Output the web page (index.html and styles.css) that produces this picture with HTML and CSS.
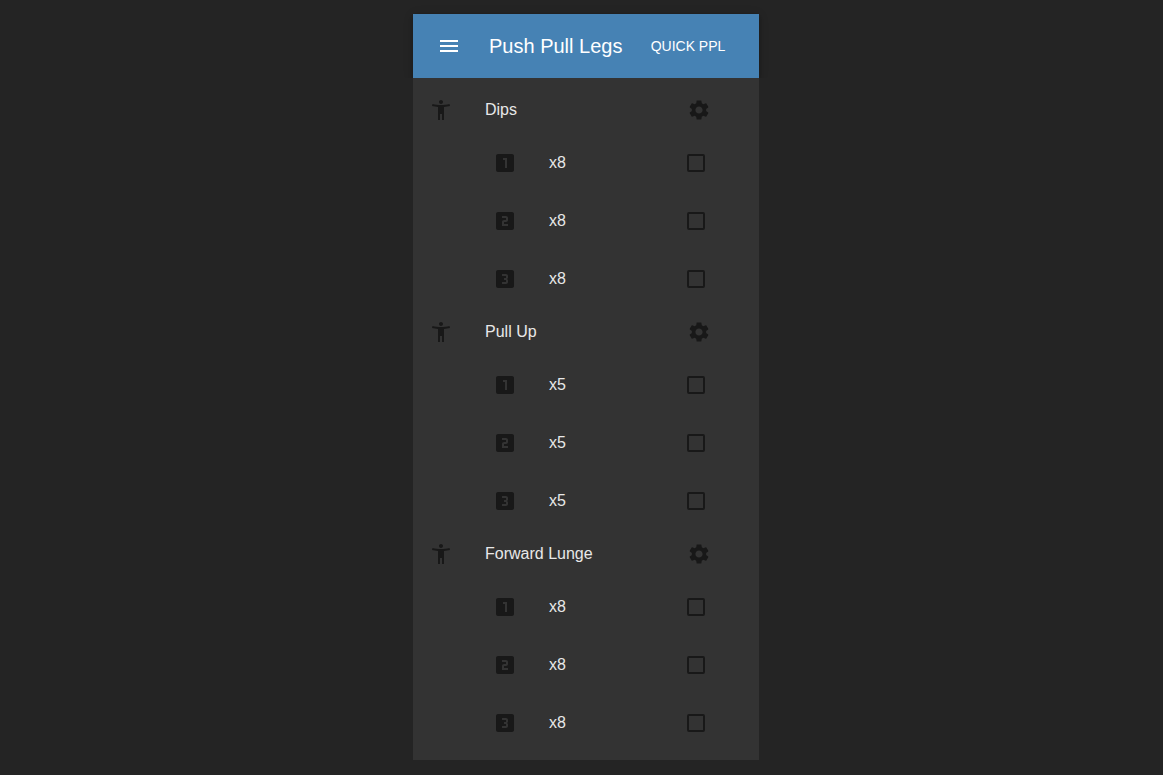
FILE: index.html
```html
<!DOCTYPE html>
<html lang="en">
<head>
<meta charset="utf-8">
<meta name="viewport" content="width=device-width, initial-scale=1">
<title>Push Pull Legs</title>
<link rel="stylesheet" href="styles.css">
</head>
<body>
<svg class="sprite" aria-hidden="true">
<symbol id="menu" viewBox="0 0 24 24"><path d="M3 18h18v-2H3v2zm0-5h18v-2H3v2zm0-7v2h18V6H3z"/></symbol>
<symbol id="person" viewBox="0 0 24 24"><path d="M20.5 6c-2.61.7-5.67 1-8.5 1s-5.89-.3-8.5-1L3 8c1.86.5 4 .83 6 1v13h2v-6h2v6h2V9c2-.17 4.14-.5 6-1l-.5-2zM12 6c1.1 0 2-.9 2-2s-.9-2-2-2-2 .9-2 2 .9 2 2 2z"/></symbol>
<symbol id="gear" viewBox="0 0 24 24"><path d="M19.14,12.94c0.04-0.3,0.06-0.61,0.06-0.94c0-0.32-0.02-0.64-0.07-0.94l2.03-1.58c0.18-0.14,0.23-0.41,0.12-0.61l-1.92-3.32c-0.12-0.22-0.37-0.29-0.59-0.22l-2.39,0.96c-0.5-0.38-1.03-0.7-1.62-0.94L14.4,2.81c-0.04-0.24-0.24-0.41-0.48-0.41h-3.84c-0.24,0-0.43,0.17-0.47,0.41L9.25,5.35C8.66,5.59,8.12,5.92,7.63,6.29L5.24,5.33c-0.22-0.08-0.47,0-0.59,0.22L2.74,8.87C2.62,9.08,2.66,9.34,2.86,9.48l2.03,1.58C4.84,11.36,4.8,11.69,4.8,12s0.02,0.64,0.07,0.94l-2.03,1.58c-0.18,0.14-0.23,0.41-0.12,0.61l1.92,3.32c0.12,0.22,0.37,0.29,0.59,0.22l2.39-0.96c0.5,0.38,1.03,0.7,1.62,0.94l0.36,2.54c0.05,0.24,0.24,0.41,0.48,0.41h3.84c0.24,0,0.44-0.17,0.47-0.41l0.36-2.54c0.59-0.24,1.13-0.56,1.62-0.94l2.39,0.96c0.22,0.08,0.47,0,0.59-0.22l1.92-3.32c0.12-0.22,0.07-0.47-0.12-0.61L19.14,12.94z M12,15.6c-1.98,0-3.6-1.62-3.6-3.6s1.62-3.6,3.6-3.6s3.6,1.62,3.6,3.6S13.98,15.6,12,15.6z"/></symbol>
<symbol id="one" viewBox="0 0 24 24"><path d="M19 3H5c-1.1 0-2 .9-2 2v14c0 1.1.9 2 2 2h14c1.1 0 2-.9 2-2V5c0-1.1-.9-2-2-2zm-5 14h-2V9h-2V7h4v10z"/></symbol>
<symbol id="two" viewBox="0 0 24 24"><path d="M19 3H5c-1.1 0-2 .9-2 2v14c0 1.1.9 2 2 2h14c1.1 0 2-.9 2-2V5c0-1.1-.9-2-2-2zm-4 8c0 1.11-.9 2-2 2h-2v2h4v2H9v-4c0-1.11.9-2 2-2h2V9H9V7h4c1.1 0 2 .89 2 2v2z"/></symbol>
<symbol id="three" viewBox="0 0 24 24"><path d="M19.01 3h-14c-1.1 0-2 .9-2 2v14c0 1.1.9 2 2 2h14c1.1 0 2-.9 2-2V5c0-1.1-.9-2-2-2zm-4 7.5c0 .83-.67 1.5-1.5 1.5.83 0 1.5.67 1.5 1.5V15c0 1.11-.9 2-2 2h-4v-2h4v-2h-2v-2h2V9h-4V7h4c1.1 0 2 .89 2 2v1.5z"/></symbol>
</svg>
<main class="panel">
<header class="bar">
<button class="icon-button" type="button" aria-label="Menu"><svg class="icon"><use href="#menu"/></svg></button>
<h1 class="title">Push Pull Legs</h1>
<button class="text-button" type="button">QUICK PPL</button>
</header>
<div class="workout">
<section>
<div class="exercise"><svg class="icon"><use href="#person"/></svg><h2 class="name">Dips</h2><button class="icon-button" type="button" aria-label="Dips settings"><svg class="icon"><use href="#gear"/></svg></button></div>
<ul class="sets">
<li class="set"><svg class="icon"><use href="#one"/></svg><label class="reps" for="d1">x8</label><input class="check" type="checkbox" id="d1"></li>
<li class="set"><svg class="icon"><use href="#two"/></svg><label class="reps" for="d2">x8</label><input class="check" type="checkbox" id="d2"></li>
<li class="set"><svg class="icon"><use href="#three"/></svg><label class="reps" for="d3">x8</label><input class="check" type="checkbox" id="d3"></li>
</ul>
</section>
<section>
<div class="exercise"><svg class="icon"><use href="#person"/></svg><h2 class="name">Pull Up</h2><button class="icon-button" type="button" aria-label="Pull Up settings"><svg class="icon"><use href="#gear"/></svg></button></div>
<ul class="sets">
<li class="set"><svg class="icon"><use href="#one"/></svg><label class="reps" for="p1">x5</label><input class="check" type="checkbox" id="p1"></li>
<li class="set"><svg class="icon"><use href="#two"/></svg><label class="reps" for="p2">x5</label><input class="check" type="checkbox" id="p2"></li>
<li class="set"><svg class="icon"><use href="#three"/></svg><label class="reps" for="p3">x5</label><input class="check" type="checkbox" id="p3"></li>
</ul>
</section>
<section>
<div class="exercise"><svg class="icon"><use href="#person"/></svg><h2 class="name">Forward Lunge</h2><button class="icon-button" type="button" aria-label="Forward Lunge settings"><svg class="icon"><use href="#gear"/></svg></button></div>
<ul class="sets">
<li class="set"><svg class="icon"><use href="#one"/></svg><label class="reps" for="f1">x8</label><input class="check" type="checkbox" id="f1"></li>
<li class="set"><svg class="icon"><use href="#two"/></svg><label class="reps" for="f2">x8</label><input class="check" type="checkbox" id="f2"></li>
<li class="set"><svg class="icon"><use href="#three"/></svg><label class="reps" for="f3">x8</label><input class="check" type="checkbox" id="f3"></li>
</ul>
</section>
</div>
</main>
</body>
</html>
```
FILE: styles.css
```css
* { box-sizing: border-box; }
body {
  margin: 0;
  padding: 14px 0 14px 9px;
  background: #242424;
  color: #e8e8e8;
  font: 16px/24px "Liberation Sans", Arial, sans-serif;
}
.sprite { display: none; }
.panel {
  width: 100%;
  max-width: 346px;
  margin: 0 auto;
  background: #333;
}
.bar {
  display: flex;
  align-items: center;
  min-height: 64px;
  padding: 0 24px;
  background: #4682b4;
  color: #fff;
  box-shadow: 0 2px 4px -1px rgba(0, 0, 0, .2), 0 4px 5px rgba(0, 0, 0, .14), 0 1px 10px rgba(0, 0, 0, .12);
  clip-path: inset(-12px -12px 0 -12px);
}
.icon {
  flex: none;
  display: block;
  width: 24px;
  height: 24px;
  fill: currentColor;
}
.icon-button, .text-button {
  flex: none;
  padding: 0;
  border: 0;
  background: none;
  color: inherit;
  cursor: pointer;
}
.title {
  flex: 1;
  margin: 0 0 0 28px;
  font-size: 20px;
  font-weight: 400;
  line-height: 32px;
  white-space: nowrap;
}
.text-button {
  min-width: 94px;
  padding: 6px 8px;
  font: 14px/24px "Liberation Sans", Arial, sans-serif;
}
.workout { padding: 8px 0; }
.exercise, .set {
  display: flex;
  align-items: center;
  color: #181818;
}
.exercise {
  min-height: 48px;
  padding: 0 48px 0 16px;
}
.name, .reps {
  flex: 1;
  margin: 0 0 0 32px;
  color: #e8e8e8;
  font-size: 16px;
  font-weight: 400;
}
.sets {
  margin: 0;
  padding: 0;
  list-style: none;
}
.set {
  min-height: 58px;
  padding: 0 54px 0 80px;
}
.check {
  appearance: none;
  width: 18px;
  height: 18px;
  margin: 0;
  border: 2px solid #181818;
  border-radius: 2px;
}
.check:checked { background: #4682b4; }
```
